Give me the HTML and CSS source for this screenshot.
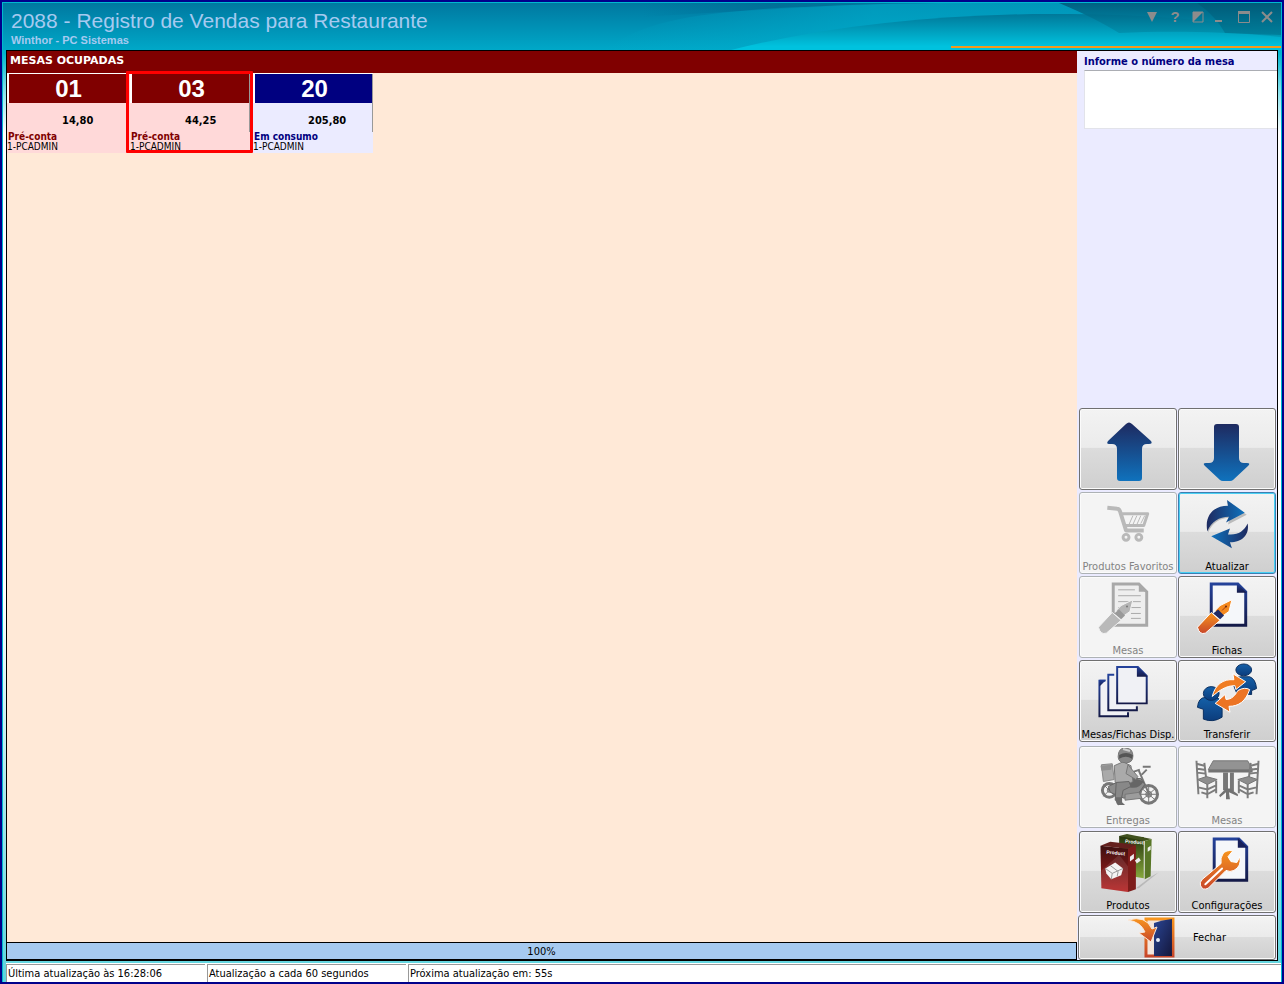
FILE: index.html
```html
<!DOCTYPE html>
<html lang="pt-BR">
<head>
  <meta charset="UTF-8" />
  <meta name="viewport" content="width=device-width, initial-scale=1.0"/>
  <title>2088 - Registro de Vendas para Restaurante</title>
  <link rel="stylesheet" href="styles.css">
</head>
<body>

  <!-- Shared gradients -->
  <svg class="defs" width="0" height="0" aria-hidden="true">
    <defs>
      <linearGradient id="blue" x1="0" y1="0" x2="0" y2="1"><stop offset="0" stop-color="#1e2a60"/><stop offset="1" stop-color="#0f72bd"/></linearGradient>
      <linearGradient id="blueSide" x1="0" y1="0" x2="1" y2="0"><stop offset="0" stop-color="#1e2a60"/><stop offset="1" stop-color="#0f72bd"/></linearGradient>
      <linearGradient id="blueBack" x1="1" y1="0" x2="0" y2="0"><stop offset="0" stop-color="#1e2a60"/><stop offset="1" stop-color="#0f72bd"/></linearGradient>
      <linearGradient id="navy" x1="0" y1="0" x2="0" y2="1"><stop offset="0" stop-color="#24429a"/><stop offset="1" stop-color="#141a48"/></linearGradient>
      <linearGradient id="door" x1="0" y1="0" x2="1" y2="1"><stop offset="0" stop-color="#2a4594"/><stop offset="1" stop-color="#14173c"/></linearGradient>
      <linearGradient id="orange" x1="0" y1="0" x2="0" y2="1"><stop offset="0" stop-color="#f7941e"/><stop offset="1" stop-color="#c8472a"/></linearGradient>
      <linearGradient id="person" x1="0" y1="0" x2="0" y2="1"><stop offset="0" stop-color="#1560a8"/><stop offset="1" stop-color="#0b3c7c"/></linearGradient>
      <linearGradient id="red" x1="0" y1="0" x2="0" y2="1"><stop offset="0" stop-color="#3c1010"/><stop offset="1" stop-color="#b51f1f"/></linearGradient>
      <linearGradient id="green" x1="0" y1="0" x2="0" y2="1"><stop offset="0" stop-color="#24340c"/><stop offset="1" stop-color="#86a83c"/></linearGradient>
    </defs>
  </svg>

  <div class="window">

    <!-- Title bar -->
    <header class="titlebar">
      <svg class="waves" viewBox="0 0 1278 47" preserveAspectRatio="none" aria-hidden="true">
        <defs>
          <linearGradient id="w0" x1="0" y1="0" x2="1" y2="0"><stop offset="0" stop-color="#006890" stop-opacity="0"/><stop offset="0.5" stop-color="#006890"/><stop offset="1" stop-color="#006890" stop-opacity="0.3"/></linearGradient>
          <linearGradient id="w1" x1="0" y1="0" x2="1" y2="0"><stop offset="0" stop-color="#00aecd" stop-opacity="0"/><stop offset="0.4" stop-color="#00aecd"/><stop offset="1" stop-color="#00a4c6"/></linearGradient>
          <linearGradient id="w2" x1="0" y1="0" x2="0" y2="1"><stop offset="0" stop-color="#007899"/><stop offset="0.9" stop-color="#00c2de"/></linearGradient>
          <linearGradient id="w3" x1="0" y1="0" x2="0" y2="1"><stop offset="0" stop-color="#005878"/><stop offset="1" stop-color="#0096b2"/></linearGradient>
        </defs>
        <path d="M640 0 H910 C830 3 730 8 640 14Z" fill="url(#w0)" opacity="0.6"/>
        <path d="M600 47 C640 20 680 12 760 6 C830 2 900 0 960 0 H1278 V47Z" fill="url(#w1)" opacity="0.6"/>
        <path d="M728 47 C820 24 920 13 1030 11 C1130 10 1210 16 1278 28 V47Z" fill="url(#w2)"/>
        <path d="M1056 0 H1278 V34 C1220 28 1160 28 1116 30 C1100 20 1080 10 1056 0Z" fill="url(#w3)" opacity="0.85"/>
        <path d="M1194 0 H1278 V32 L1222 30 C1216 19 1206 8 1194 0Z" fill="#004c68" opacity="0.3"/>
      </svg>
      <div class="titles">
        <h1>2088 - Registro de Vendas para Restaurante</h1>
        <p>Winthor - PC Sistemas</p>
      </div>
      <div class="window-buttons">
        <button aria-label="Menu"><svg width="12" height="14" viewBox="0 0 12 14"><path d="M1 2H11L6 12Z" fill="#8c8c8c"/></svg></button>
        <button class="help" aria-label="Ajuda">?</button>
        <button aria-label="Alternar"><svg width="12" height="14" viewBox="0 0 12 14"><path d="M1 2H11V12H1Z" fill="none" stroke="#8c8c8c"/><path d="M1 2H11L1 12Z" fill="#8c8c8c"/></svg></button>
        <button aria-label="Minimizar"><svg width="12" height="14" viewBox="0 0 12 14"><path d="M0 11H7" stroke="#8c8c8c" stroke-width="2"/></svg></button>
        <button aria-label="Maximizar"><svg width="12" height="14" viewBox="0 0 12 14"><path d="M.5 2H11.500V12.500H.5Z" fill="none" stroke="#8c8c8c"/><path d="M0 2.500H12" stroke="#8c8c8c" stroke-width="3"/></svg></button>
        <button aria-label="Fechar janela"><svg width="12" height="14" viewBox="0 0 12 14"><path d="M1 2L11 12M11 2L1 12" stroke="#8c8c8c" stroke-width="2"/></svg></button>
      </div>
    </header>

    <main class="frame">

      <!-- Occupied tables -->
      <section class="tables">
        <h2>MESAS OCUPADAS</h2>
        <div class="cards">
          <article class="card closing">
            <h3>01</h3>
            <p class="value">14,80</p>
            <p class="status">Pré-conta</p>
            <p class="user">1-PCADMIN</p>
          </article>
          <article class="card closing selected">
            <h3>03</h3>
            <p class="value">44,25</p>
            <p class="status">Pré-conta</p>
            <p class="user">1-PCADMIN</p>
          </article>
          <article class="card">
            <h3>20</h3>
            <p class="value">205,80</p>
            <p class="status">Em consumo</p>
            <p class="user">1-PCADMIN</p>
          </article>
        </div>
        <div class="progress" role="progressbar" aria-valuenow="100">100%</div>
      </section>

      <!-- Side panel -->
      <aside class="side">
        <div class="field">
          <label for="mesa">Informe o número da mesa</label>
          <input type="text" id="mesa">
        </div>

        <div class="actions">
          <button class="tile" aria-label="Subir">
            <svg viewBox="0 0 94 78"><path d="M45 14Q48 11 51 14L70 31Q72 34 68 34H66Q61 34 61 39V68Q61 71 58 71H39Q36 71 36 68V39Q36 34 31 34H28Q25 34 27 31Z" fill="url(#blue)"/></svg>
          </button>
          <button class="tile" aria-label="Descer">
            <svg viewBox="0 0 94 78"><path d="M37 14H56Q59 14 59 17V48Q59 53 64 53H67Q71 53 68 56L53 70Q52 71 50 71H43Q41 71 40 70L25 56Q22 53 26 53H29Q34 53 34 48V17Q34 14 37 14Z" fill="url(#blue)"/></svg>
          </button>
          <button class="tile" disabled>
            <svg viewBox="0 0 94 66"><g fill="none" stroke="#b9b9b9" stroke-width="3" stroke-linejoin="round"><path d="M26 14L36 15Q38 15 39 18L45 37H63" stroke-width="4"/><path d="M41 20H67L63 32H44"/><path d="M48 31L52 22M52 31L56 22M56 31L60 22M60 30L64 22" stroke-width="1"/><circle cx="45" cy="44" r="3"/><circle cx="58" cy="44" r="3"/></g></svg>
            <span>Produtos Favoritos</span>
          </button>
          <button class="tile focused">
            <svg viewBox="0 0 94 66"><path d="M28 39C25 24 33 13 48 13L47 7L67 21L48 31L50 24C40 24 32 29 28 39Z" fill="#999" opacity="0.6"/><path d="M27 38C24 22 33 12 48 12L47 6L65 19L46 29L49 23C39 23 31 28 27 38Z" fill="url(#blueSide)"/><path d="M68 30C70 42 62 49 50 49L52 55L31 43L50 35L48 41C58 42 64 38 68 30Z" fill="url(#blueBack)"/></svg>
            <span>Atualizar</span>
          </button>
          <button class="tile" disabled>
            <svg viewBox="0 0 94 66"><path d="M32 6H58L66 14V48H32Z" fill="#eee" stroke="#a8a8a8" stroke-width="3"/><path d="M58 5V14H67Z" fill="#a8a8a8"/><path d="M37 12H54M37 18H60M37 24H60M37 30H60M50 36H60M50 41H60" stroke="#aaa"/><path d="M40 28L52 22L49 34L42 39L35 33Z" fill="#b5b5b5" stroke="#f3f3f3"/><path d="M38 32L44 38L40 42L33 36Z" fill="#999"/><path d="M31 35L40 43L25 56Q19 58 17 50Z" fill="#b9b9b9" stroke="#f3f3f3"/><circle cx="46" cy="29" r="1" fill="#777"/></svg>
            <span>Mesas</span>
          </button>
          <button class="tile">
            <svg viewBox="0 0 94 66"><path d="M31 6H58L66 14V48H31Z" fill="#f5f7fa" stroke="url(#navy)" stroke-width="3"/><path d="M57 5V15H67Z" fill="url(#navy)"/><path d="M40 28L52 22L49 34L42 39L35 33Z" fill="#f58a20" stroke="#fff"/><path d="M38 32L44 38L40 42L33 36Z" fill="#202c66"/><path d="M31 35L40 43L25 56Q19 58 17 50Z" fill="url(#orange)" stroke="#fff"/><path d="M42 33L46 29" stroke="#a33b14"/><circle cx="46" cy="29" r="1" fill="#702810"/></svg>
            <span>Fichas</span>
          </button>
          <button class="tile">
            <svg viewBox="0 0 94 66"><g fill="#f0f1f5" stroke="url(#navy)" stroke-width="2"><path d="M24 19H18V55H47V51"/><path d="M33 13H27V49H56V45"/><path d="M36 5H57L66 14V42H36Z"/></g><path d="M56 4V15H67Z" fill="url(#navy)"/><path d="M18 18H25L18 25Z" fill="url(#navy)"/></svg>
            <span>Mesas/Fichas Disp.</span>
          </button>
          <button class="tile">
            <svg viewBox="0 0 94 66"><g fill="url(#person)" stroke="#0a2f60"><path d="M57 32L53 22Q54 15 61 15H70Q76 17 77 27L72 29V33Z"/><ellipse cx="64" cy="8" rx="8" ry="6"/><path d="M23 58V48L17 46Q18 36 25 36H36Q43 37 42 56Q33 62 23 58Z"/><ellipse cx="31" cy="32" rx="8" ry="7"/></g><path d="M32 35C35 23 43 17 54 18L53 12L66 20L56 28L55 24C46 24 39 29 32 35Z" fill="#f07c22" stroke="#fff"/><path d="M70 28C66 40 59 45 49 45L50 51L35 42L45 33L46 38C52 38 55 34 58 29Q65 25 70 28Z" fill="#ec7424" stroke="#fff"/></svg>
            <span>Transferir</span>
          </button>
        </div>

        <div class="actions lower">
          <button class="tile" disabled>
            <svg viewBox="0 0 94 66"><g fill="none" stroke="#777"><circle cx="28" cy="43" r="7" stroke-width="3"/><circle cx="68" cy="47" r="9" stroke-width="3"/><circle cx="68" cy="47" r="3" fill="#aaa"/><circle cx="28" cy="43" r="2" fill="#aaa"/><path d="M68 38V56M59 47H77M61 41L75 53M61 53L75 41M22 37L34 49M22 49L34 37"/><path d="M53 24L59 22M58 23L68 46M61 27L66 22M62 19H70" stroke-width="2"/></g><path d="M27 39L44 31L60 31L64 37L57 47L43 51L29 45Z" fill="#8c8c8c" stroke="#666"/><path d="M45 32Q53 29 63 34Q58 42 49 40Z" fill="#666"/><path d="M44 47L58 45L61 51L44 53Z" fill="#9c9c9c" stroke="#777"/><path d="M33 18L42 14L50 18L52 34L43 39L34 35Z" fill="#aaa" stroke="#777"/><path d="M47 17L57 29L55 32L45 26Z" fill="#a0a0a0" stroke="#777"/><path d="M20 17L31 16L33 32L22 34Z" fill="#aaa" stroke="#888"/><path d="M19 18L31 17L30 22L20 23Z" fill="#919191"/><path d="M35 35L48 34L50 39L42 43L40 53H34Z" fill="#888" stroke="#666"/><path d="M34 50H41V55L44 58H38Q35 59 34 50Z" fill="#6c6c6c"/><path d="M37 9Q37 0 44 0Q52 0 52 8Q52 15 45 15Q37 15 37 9Z" fill="#888" stroke="#777"/><path d="M38 7Q45 3 52 7L51 11Q45 7 38 11Z" fill="#555"/><path d="M42 1L49 3" stroke="#ccc" stroke-width="2"/></svg>
            <span>Entregas</span>
          </button>
          <button class="tile" disabled>
            <svg viewBox="0 0 94 66"><path d="M33 13H68L73 22H28Z" fill="#939393" stroke="#777"/><path d="M28 22H73V25H28Z" fill="#737373"/><path d="M43 25H48V43H43ZM50 25H54V44H50Z" fill="#777"/><path d="M39 48L46 41H50L58 47V49L49 45L50 52H46V45L40 50Z" fill="#727272"/><g id="chair"><path d="M16 13L18 47M24 15L26 32M16 16L24 18M17 21L24 22M17 25L25 26M27 35V51M36 33V46M21 45L27 47L36 42M18 40L27 42L36 38" fill="none" stroke="#7c7c7c" stroke-width="2"/><path d="M17 32L26 29L37 32L27 37Z" fill="#8d8d8d" stroke="#777"/></g><use href="#chair" transform="matrix(-1 0 0 1 95 0)"/></svg>
            <span>Mesas</span>
          </button>
          <button class="tile">
            <svg viewBox="0 0 94 66"><path d="M55 56L71 44L78 40L58 56Z" fill="#999" opacity="0.5"/><path d="M38 3L63 4V46L38 42Z" fill="url(#green)"/><path d="M38 3L46 1L71 6L64 8Z" fill="#40511e"/><path d="M64 8L71 6L70 44L64 47Z" fill="#587626"/><path d="M19 13L47 16V60L20 56Z" fill="url(#red)"/><path d="M19 13L29 9L55 12L47 16Z" fill="#64201d"/><path d="M47 16L55 12V57L47 60Z" fill="#7d1c1a"/><path d="M20 38L38 22L47 34V60L20 56Z" fill="#fff" opacity="0.1"/><path d="M24 36L34 30L42 36L40 43L30 47L25 41Z" fill="#f4f4f4"/><path d="M24 36L31 41L42 36M31 41L30 47M29 33L37 39L36 44" fill="none" stroke="#999"/><path d="M49 24L53 21V26L49 29ZM67 15L70 13V17L67 19ZM54 28L58 25L60 28L56 31Z" fill="#eee"/><text x="25" y="21" class="box-text" transform="rotate(5 25 21)">Product</text><text x="44" y="10" class="box-text" transform="rotate(5 44 10)">Product</text></svg>
            <span>Produtos</span>
          </button>
          <button class="tile">
            <svg viewBox="0 0 94 66"><path d="M34 6H59L67 14V48H34Z" fill="#f5f7fa" stroke="url(#navy)" stroke-width="3"/><path d="M58 5V15H68Z" fill="#17205a"/><path d="M43 21Q46 17 53 18L48 24L51 29L57 30L60 24Q62 34 54 38Q50 40 46 38L28 56Q22 59 20 53Q19 50 22 47L41 31Q40 25 43 21Z" fill="url(#orange)" stroke="#fff"/><path d="M25 52L42 36" stroke="#fff" stroke-width="2" stroke-linecap="round"/></svg>
            <span>Configurações</span>
          </button>
        </div>

        <button class="close">
          <svg width="48" height="42" viewBox="0 0 48 42"><path d="M18 2H45V39H18Z" fill="#f4e6dc" stroke="url(#orange)" stroke-width="3"/><path d="M26 6Q34 3 44 2V39H26Z" fill="url(#door)"/><circle cx="30" cy="23" r="2" fill="#e8ecf6"/><path d="M0 3Q18 -2 24 12L29 10L23 25L11 16L17 15Q13 5 0 3Z" fill="url(#orange)" stroke="#fbe9dc"/></svg>
          <span>Fechar</span>
        </button>
      </aside>
    </main>

    <footer class="statusbar">
      <span>Última atualização às 16:28:06</span>
      <span>Atualização a cada 60 segundos</span>
      <span>Próxima atualização em: 55s</span>
    </footer>
  </div>

</body>
</html>
```
FILE: styles.css
```css
* { box-sizing: border-box; margin: 0; padding: 0; }
body { font-family: "DejaVu Sans Condensed", "DejaVu Sans", sans-serif; font-size: 11px; min-height: 100vh; display: flex; background: #00008b; padding: 2px; }
button { font: inherit; color: #000; }
.defs { position: absolute; }

.window { flex: 1; display: flex; flex-direction: column; border: 1px solid #00b8d0; border-bottom: 0; background: linear-gradient(#00b4ce 50px, #8ce4ee 90px, #fff 130px, #fff 60%, #5cd4de 100%); }

.titlebar { position: relative; height: 47px; display: flex; justify-content: space-between; background: linear-gradient(#0078a0, #00a8c8); }
.titlebar::after { content: ""; position: absolute; right: 0; bottom: 2px; width: 330px; height: 2px; background: #f39a1c; }
.waves { position: absolute; inset: 0; width: 100%; height: 100%; }
.titles { position: relative; padding: 6px 8px; font-family: "Liberation Sans", Arial, sans-serif; color: #a6caf0; }
.titles h1 { font-size: 21px; line-height: 24px; font-weight: normal; }
.titles p { font-size: 11px; line-height: 14px; font-weight: bold; }
.window-buttons { position: relative; display: flex; align-items: flex-start; gap: 11px; padding: 7px 8px; }
.window-buttons button { width: 12px; height: 14px; background: none; border: 0; cursor: pointer; }
.window-buttons svg { display: block; }
.window-buttons .help { color: #8c8c8c; font: bold 15px/14px "Liberation Sans", Arial, sans-serif; }

.frame { flex: 1; display: flex; margin: 0 3px; border: 1px solid #000; }
.tables { flex: 1; display: flex; flex-direction: column; background: #ffe9d7; }
.tables h2 { background: #800000; color: #fff; font-family: "DejaVu Sans", sans-serif; font-size: 11px; line-height: 20px; height: 22px; padding-left: 3px; }
.cards { flex: 1; display: flex; align-items: flex-start; gap: 3px; }
.card { position: relative; width: 120px; height: 80px; border-top: 1px solid #fff; background: #ebebff; color: #000; }
.card h3 { margin: 0 1px 0 2px; padding-left: 2px; background: #000080; color: #fff; font: bold 24px/29px "Liberation Sans", Arial, sans-serif; text-align: center; box-shadow: -2px 0 #fff, 1px 0 #999; }
.card .value { padding: 9px 0 3px 55px; font-size: 11px; line-height: 17px; font-weight: bold; border-right: 1px solid #999; }
.card .status { padding-left: 1px; font-size: 10px; line-height: 10px; font-weight: bold; color: #000080; }
.card .user { font-size: 10px; line-height: 10px; }
.card.closing { background: #ffd9d9; }
.card.closing:not(.selected) { box-shadow: 3px 0 #ffd9d9; }
.card.closing h3 { background: #800000; }
.card.closing .status { color: #800000; }
.card.selected::after { content: ""; position: absolute; inset: -3px -3px 0 -4px; border: 3px solid #f00; border-radius: 1px; }
.progress { height: 18px; border: 1px solid #000; border-left: 0; background: #a6caf0; text-align: center; line-height: 17px; }

.side { width: 200px; display: flex; flex-direction: column; gap: 4px; background: #ebebff; padding: 0 1px; }
.field { flex: 1; display: flex; flex-direction: column; padding-left: 6px; }
.field label { color: #000080; padding-top: 3px; font-size: 11px; line-height: 16px; font-weight: bold; }
.field input { height: 59px; border: 1px solid #e2e3ea; border-top-color: #abadb3; border-right: 0; background: #fff; padding: 0 6px; font-size: 24px; margin-right: -1px; }

.actions { display: grid; grid-template-columns: 1fr 1fr; grid-auto-rows: 82px; gap: 2px 1px; padding-left: 1px; }
.actions.lower { row-gap: 3px; }
.tile, .close { border: 1px solid #707070; border-radius: 3px; background: linear-gradient(#f3f3f3, #ebebeb 48%, #dcdcdc 49%, #cfcfcf); box-shadow: inset 0 0 0 1px #fbfbfb; cursor: pointer; }
.tile { display: flex; flex-direction: column; align-items: center; padding: 1px; }
.tile svg { flex: 1; width: 94px; min-height: 0; display: block; }
.tile span { height: 13px; line-height: 16px; white-space: nowrap; }
.tile:disabled { background: #f4f4f4; border-color: #adb2b5; color: #838383; cursor: default; }
.tile.focused { border-color: #3c7fb1; box-shadow: inset 0 0 0 1px #48d0f4; }
.box-text { font: bold 5px "Liberation Sans", Arial, sans-serif; fill: #fff; }
.close { height: 45px; margin-top: -2px; display: flex; align-items: center; gap: 17px; padding: 0 49px; }

.statusbar { display: flex; gap: 2px; margin: 2px 0 0 3px; padding-top: 1px; height: 19px; background: #fff; }
.statusbar span { width: 199px; border-top: 1px solid #999; border-left: 1px solid #999; padding-left: 1px; line-height: 17px; white-space: nowrap; }
.statusbar span:last-child { flex: 1; }
```
